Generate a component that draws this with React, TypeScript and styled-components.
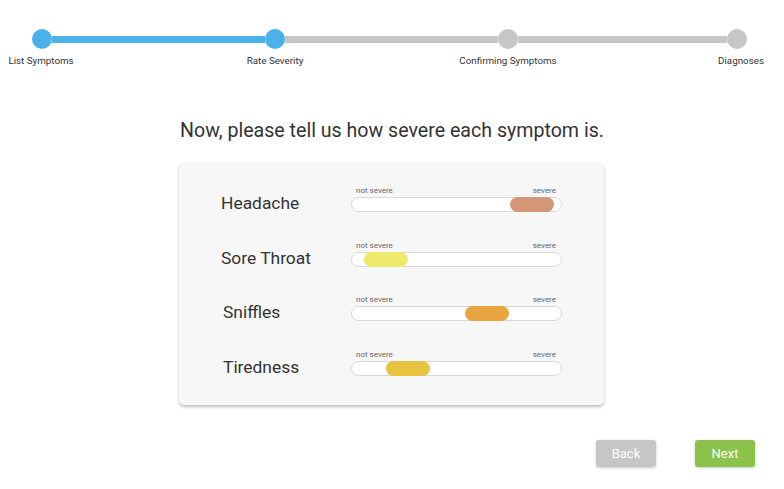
import React from "react";
import styled, { createGlobalStyle } from "styled-components";

const GlobalStyle = createGlobalStyle`
  html, body {
    margin: 0;
    padding: 0;
    background: #ffffff;
  }
  body {
    font-family: Roboto, "Liberation Sans", Arial, sans-serif;
    color: #333333;
  }
  * { box-sizing: border-box; }
`;

const Page = styled.div`
  width: 784px;
  height: 489px;
  overflow: hidden;
  display: flex;
  flex-direction: column;
`;

const Stepper = styled.div`
  display: grid;
  grid-template-columns: 20px 213px 20px 213px 20px 209px 20px;
  grid-template-rows: 20px 12px;
  row-gap: 6px;
  padding: 29px 0 0 32px;
`;

const Dot = styled.div<{ $done: boolean }>`
  width: 20px;
  height: 20px;
  border-radius: 50%;
  background: ${(p) => (p.$done ? "#4bb1ea" : "#c6c6c6")};
`;

const Segment = styled.div<{ $done: boolean }>`
  height: 7px;
  align-self: center;
  background: ${(p) => (p.$done ? "#4bb1ea" : "#c6c6c6")};
`;

const StepLabelCell = styled.div<{ $col: number; $shift: number }>`
  grid-row: 2;
  grid-column: ${(p) => p.$col};
  display: flex;
  justify-content: center;
  transform: translateX(${(p) => p.$shift}px);
`;

const StepLabel = styled.span`
  white-space: nowrap;
  font-size: 9.8px;
  line-height: 12px;
  color: #333333;
`;

const Heading = styled.h1`
  margin: 52px 0 0;
  font-size: 19.6px;
  line-height: 23px;
  font-weight: 400;
  text-align: center;
  color: #333333;
`;

const Card = styled.div`
  margin: 20px 0 0 179px;
  width: 425px;
  height: 243px;
  padding: 24px 42px 0;
  background: #f7f7f7;
  border-radius: 5px;
  box-shadow: 0 2px 3px rgba(0, 0, 0, 0.25);
  display: flex;
  flex-direction: column;
  gap: 28.5px;
`;

const Row = styled.div`
  display: grid;
  grid-template-columns: 130px 211px;
  grid-template-rows: 10px 15px;
  row-gap: 1px;
`;

const SymptomName = styled.div<{ $indent: number }>`
  grid-column: 1;
  grid-row: 2;
  align-self: center;
  margin: 0 0 3px ${(p) => p.$indent}px;
  font-size: 17.4px;
  line-height: 20px;
  color: #333333;
  white-space: nowrap;
`;

const Captions = styled.div`
  grid-column: 2;
  grid-row: 1;
  display: flex;
  justify-content: space-between;
  padding: 0 6px 0 5px;
  font-size: 8px;
  line-height: 10px;
  color: #666666;
`;

const Track = styled.div`
  grid-column: 2;
  grid-row: 2;
  position: relative;
  height: 15px;
  background: #ffffff;
  border: 1px solid #d8d8d8;
  border-radius: 8px;
`;

const Thumb = styled.div<{ $color: string }>`
  position: absolute;
  top: -1px;
  width: 44px;
  height: 15px;
  border-radius: 8px;
  background: ${(p) => p.$color};
`;

const Actions = styled.div`
  margin-top: 35px;
  display: flex;
  justify-content: flex-end;
  gap: 39px;
  padding-right: 29px;
`;

const Button = styled.button<{ $variant: "back" | "next" }>`
  width: 60px;
  height: 27px;
  border: none;
  border-radius: 3px;
  font-family: Roboto, "Liberation Sans", Arial, sans-serif;
  font-size: 13px;
  color: #ffffff;
  background: ${(p) => (p.$variant === "next" ? "#8bc34a" : "#c6c6c6")};
  box-shadow: 0 1px 3px rgba(0, 0, 0, 0.2);
  cursor: pointer;
  padding: 0;
`;

const steps = [
  { label: "List Symptoms", shift: -1 },
  { label: "Rate Severity", shift: 0 },
  { label: "Confirming Symptoms", shift: 0 },
  { label: "Diagnoses", shift: 4 },
];
const currentStep = 1;

const symptoms = [
  { name: "Headache", value: 0.95, color: "#d39677", indent: 0 },
  { name: "Sore Throat", value: 0.08, color: "#ede96a", indent: 0 },
  { name: "Sniffles", value: 0.685, color: "#e9a540", indent: 2 },
  { name: "Tiredness", value: 0.21, color: "#e8c340", indent: 2 },
];

const THUMB_RANGE = 167;

export default function App() {
  const stepperCells: React.ReactNode[] = [];
  steps.forEach((s, i) => {
    stepperCells.push(<Dot key={`d${i}`} $done={i <= currentStep} />);
    if (i < steps.length - 1) {
      stepperCells.push(<Segment key={`s${i}`} $done={i < currentStep} />);
    }
  });

  return (
    <Page>
      <GlobalStyle />
      <Stepper>
        {stepperCells}
        {steps.map((s, i) => (
          <StepLabelCell key={s.label} $col={i * 2 + 1} $shift={s.shift}>
            <StepLabel>{s.label}</StepLabel>
          </StepLabelCell>
        ))}
      </Stepper>
      <Heading>Now, please tell us how severe each symptom is.</Heading>
      <Card>
        {symptoms.map((s) => (
          <Row key={s.name}>
            <SymptomName $indent={s.indent}>{s.name}</SymptomName>
            <Captions>
              <span>not severe</span>
              <span>severe</span>
            </Captions>
            <Track>
              <Thumb $color={s.color} style={{ left: `${Math.round(s.value * THUMB_RANGE) - 1}px` }} />
            </Track>
          </Row>
        ))}
      </Card>
      <Actions>
        <Button $variant="back">Back</Button>
        <Button $variant="next">Next</Button>
      </Actions>
    </Page>
  );
}
